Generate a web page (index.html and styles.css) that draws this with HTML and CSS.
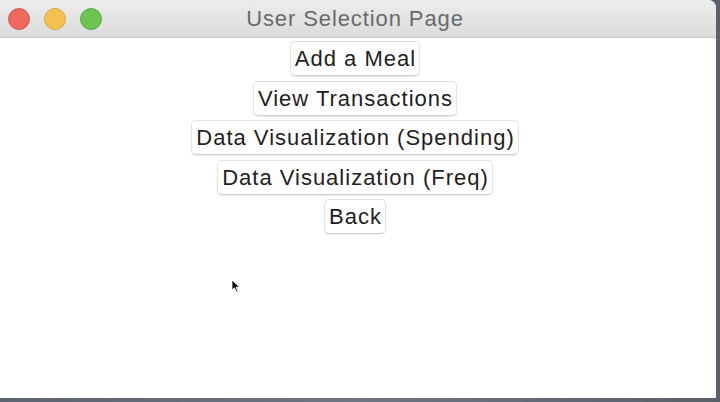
FILE: index.html
```html
<!DOCTYPE html>
<html>
<head>
<meta charset="utf-8">
<link rel="stylesheet" href="styles.css">
</head>
<body>
<div class="desktop">
  <div class="window">
    <div class="titlebar">
      <div class="lights">
        <span class="light red"></span>
        <span class="light yellow"></span>
        <span class="light green"></span>
      </div>
      <div class="title">User Selection Page</div>
    </div>
    <div class="content">
      <button class="btn">Add a Meal</button>
      <button class="btn">View Transactions</button>
      <button class="btn">Data Visualization (Spending)</button>
      <button class="btn">Data Visualization (Freq)</button>
      <button class="btn">Back</button>
      <svg class="cursor" width="10" height="14" viewBox="0 0 10 14">
        <path d="M1 1 L1 11 L3.5 8.8 L5.5 13 L7 12.3 L5.1 8.3 L8.3 8.1 Z" fill="#000" stroke="#fff" stroke-width="0.8"/>
      </svg>
    </div>
  </div>
</div>
</body>
</html>
```
FILE: styles.css
```css
html, body {
  margin: 0;
  padding: 0;
  width: 720px;
  height: 402px;
  overflow: hidden;
}
.desktop {
  width: 720px;
  height: 402px;
  background: linear-gradient(90deg, #5c6470 0%, #6f7580 50%, #5a6068 100%);
  display: flex;
  flex-direction: column;
}
.window {
  width: 716px;
  height: 398px;
  background: #ffffff;
  border-top-right-radius: 8px;
  display: flex;
  flex-direction: column;
  overflow: hidden;
  font-family: "Liberation Sans", Arial, sans-serif;
}
.titlebar {
  height: 37px;
  flex: none;
  background: linear-gradient(#ececec, #dcdcdc);
  border-bottom: 1px solid #c4c4c4;
  position: relative;
  display: flex;
  align-items: center;
  justify-content: center;
}
.lights {
  position: absolute;
  left: 8px;
  top: 8px;
  display: flex;
  gap: 14px;
}
.light {
  width: 22px;
  height: 22px;
  border-radius: 50%;
  box-sizing: border-box;
}
.red { background: #ee6a5e; border: 1px solid #d1574c; }
.yellow { background: #f4c150; border: 1px solid #d9a63f; }
.green { background: #6cc551; border: 1px solid #58ad3f; }
.title {
  font-size: 22px;
  letter-spacing: 0.9px;
  color: #6a6a6a;
  margin-left: -6px;
  margin-top: 1px;
}
.content {
  flex: 1;
  position: relative;
  display: flex;
  flex-direction: column;
  align-items: center;
  gap: 4.5px;
  padding-top: 3px;
  padding-right: 6px;
}
.btn {
  font-family: "Liberation Sans", Arial, sans-serif;
  font-size: 22px;
  letter-spacing: 1px;
  color: #1e1e1e;
  background: #ffffff;
  border: 1px solid #e2e2e2;
  border-bottom-color: #cfcfcf;
  border-radius: 5px;
  box-shadow: 0 1px 1px rgba(0,0,0,0.08);
  height: 35px;
  padding: 0 3px 0 4px;
  line-height: 33px;
  margin: 0;
}
.cursor {
  position: absolute;
  left: 231px;
  top: 241px;
}
```
